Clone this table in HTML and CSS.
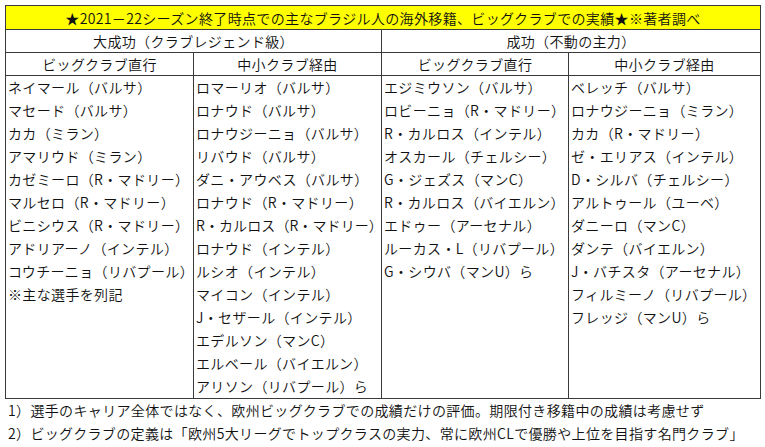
FILE: index.html
```html
<!DOCTYPE html>
<html lang="ja">
<head>
<meta charset="utf-8">
<link rel="stylesheet" href="styles.css">
</head>
<body>
<div class="page">
  <table class="board">
    <colgroup>
      <col class="c1"><col class="c2"><col class="c3"><col class="c4">
    </colgroup>
    <tr class="title-row">
      <th colspan="4">★2021－22シーズン終了時点での主なブラジル人の海外移籍、ビッグクラブでの実績★※著者調べ</th>
    </tr>
    <tr class="head-row">
      <th colspan="2">大成功（クラブレジェンド級）</th>
      <th colspan="2">成功（不動の主力）</th>
    </tr>
    <tr class="head-row">
      <th>ビッグクラブ直行</th>
      <th>中小クラブ経由</th>
      <th>ビッグクラブ直行</th>
      <th>中小クラブ経由</th>
    </tr>
    <tr class="data-row">
      <td>
        <div class="line">ネイマール（バルサ）</div>
        <div class="line">マセード（バルサ）</div>
        <div class="line">カカ（ミラン）</div>
        <div class="line">アマリウド（ミラン）</div>
        <div class="line">カゼミーロ（R・マドリー）</div>
        <div class="line">マルセロ（R・マドリー）</div>
        <div class="line">ビニシウス（R・マドリー）</div>
        <div class="line">アドリアーノ（インテル）</div>
        <div class="line">コウチーニョ（リバプール）</div>
        <div class="line">※主な選手を列記</div>
      </td>
      <td>
        <div class="line">ロマーリオ（バルサ）</div>
        <div class="line">ロナウド（バルサ）</div>
        <div class="line">ロナウジーニョ（バルサ）</div>
        <div class="line">リバウド（バルサ）</div>
        <div class="line">ダニ・アウベス（バルサ）</div>
        <div class="line">ロナウド（R・マドリー）</div>
        <div class="line tight">R・カルロス（R・マドリー）</div>
        <div class="line">ロナウド（インテル）</div>
        <div class="line">ルシオ（インテル）</div>
        <div class="line">マイコン（インテル）</div>
        <div class="line">J・セザール（インテル）</div>
        <div class="line">エデルソン（マンC）</div>
        <div class="line">エルベール（バイエルン）</div>
        <div class="line">アリソン（リバプール）ら</div>
      </td>
      <td>
        <div class="line">エジミウソン（バルサ）</div>
        <div class="line">ロビーニョ（R・マドリー）</div>
        <div class="line">R・カルロス（インテル）</div>
        <div class="line">オスカール（チェルシー）</div>
        <div class="line">G・ジェズス（マンC）</div>
        <div class="line">R・カルロス（バイエルン）</div>
        <div class="line">エドゥー（アーセナル）</div>
        <div class="line">ルーカス・L（リバプール）</div>
        <div class="line">G・シウバ（マンU）ら</div>
      </td>
      <td>
        <div class="line">ベレッチ（バルサ）</div>
        <div class="line">ロナウジーニョ（ミラン）</div>
        <div class="line">カカ（R・マドリー）</div>
        <div class="line">ゼ・エリアス（インテル）</div>
        <div class="line">D・シルバ（チェルシー）</div>
        <div class="line">アルトゥール（ユーベ）</div>
        <div class="line">ダニーロ（マンC）</div>
        <div class="line">ダンテ（バイエルン）</div>
        <div class="line">J・バチスタ（アーセナル）</div>
        <div class="line">フィルミーノ（リバプール）</div>
        <div class="line">フレッジ（マンU）ら</div>
      </td>
    </tr>
  </table>
  <div class="notes">
    <p class="note">1）選手のキャリア全体ではなく、欧州ビッグクラブでの成績だけの評価。期限付き移籍中の成績は考慮せず</p>
    <p class="note">2）ビッグクラブの定義は「欧州5大リーグでトップクラスの実力、常に欧州CLで優勝や上位を目指す名門クラブ」</p>
  </div>
</div>
</body>
</html>
```

FILE: styles.css
```css
html, body {
  margin: 0;
  padding: 0;
  background: #ffffff;
}

body {
  font-family: "Noto Sans CJK JP", "Noto Sans", sans-serif;
  font-size: 14px;
  font-weight: 350;
  letter-spacing: 0.35px;
  color: #111111;
}

.page {
  padding: 5px 0 0 5px;
  width: 760px;
}

.board {
  border-collapse: collapse;
  table-layout: fixed;
  width: 755px;
}

.c1 { width: 188px; }
.c2 { width: 188px; }
.c3 { width: 187px; }
.c4 { width: 192px; }

.board th,
.board td {
  border: 1px solid #3a3a3a;
  padding: 0 0 0 2px;
  white-space: nowrap;
}

.board th {
  font-weight: 350;
  text-align: center;
  line-height: 22px;
  height: 22px;
  padding: 0 2px;
}

.title-row th {
  background: #ffff00;
  height: 23px;
}

.data-row td {
  vertical-align: top;
  text-align: left;
  height: 321px;
}

.line {
  line-height: 23px;
  height: 23px;
}

.line.tight {
  letter-spacing: 0.1px;
}

.notes {
  padding-left: 3px;
}

.note {
  margin: 0;
  line-height: 23px;
  white-space: nowrap;
}
```
